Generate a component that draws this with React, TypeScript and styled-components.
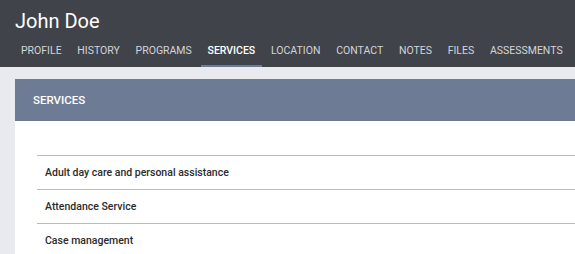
import React from "react";
import styled, { createGlobalStyle } from "styled-components";

const Global = createGlobalStyle`
  html, body { margin: 0; padding: 0; }
  body {
    background: #e9eaef;
    font-family: Roboto, "Noto Sans", "Liberation Sans", sans-serif;
    overflow: hidden;
  }
`;

const Header = styled.header`
  background: #404349;
  display: flex;
  flex-direction: column;
`;

const Title = styled.h1`
  margin: 0;
  padding: 9px 0 0 15px;
  font-size: 20px;
  line-height: 24px;
  font-weight: 400;
  color: #ffffff;
`;

const Nav = styled.nav`
  display: flex;
  padding-left: 14px;
  gap: 1.75px;
  white-space: nowrap;
`;

const Tab = styled.a<{ $active?: boolean }>`
  display: block;
  padding: 11px 7px 8px;
  font-size: 10.5px;
  line-height: 13px;
  font-weight: ${(p) => (p.$active ? 500 : 400)};
  color: ${(p) => (p.$active ? "#ffffff" : "#d3d5d9")};
  border-bottom: 2px solid ${(p) => (p.$active ? "#6e7b94" : "transparent")};
  text-transform: uppercase;
  cursor: pointer;
`;

const Card = styled.section`
  margin: 12px 0 0 15px;
  background: #ffffff;
`;

const CardHeader = styled.div`
  height: 42px;
  display: flex;
  align-items: center;
  padding-left: 18px;
  background: #6e7b94;
  color: #ffffff;
  font-size: 11.5px;
  font-weight: 500;
  text-transform: uppercase;
`;

const CardBody = styled.div`
  padding: 34px 0 0 22px;
  display: flex;
  flex-direction: column;
`;

const Row = styled.div`
  border-top: 1px solid #bcbcbc;
  height: 33px;
  display: flex;
  align-items: center;
  padding-left: 8px;
  font-size: 10.5px;
  font-weight: 500;
  color: #2b2b2b;
`;

const tabs = [
  "Profile",
  "History",
  "Programs",
  "Services",
  "Location",
  "Contact",
  "Notes",
  "Files",
  "Assessments",
];

const services = [
  "Adult day care and personal assistance",
  "Attendance Service",
  "Case management",
];

export default function App() {
  return (
    <>
      <Global />
      <Header>
        <Title>John Doe</Title>
        <Nav>
          {tabs.map((t) => (
            <Tab key={t} $active={t === "Services"}>
              {t}
            </Tab>
          ))}
        </Nav>
      </Header>
      <Card>
        <CardHeader>Services</CardHeader>
        <CardBody>
          {services.map((s) => (
            <Row key={s}>{s}</Row>
          ))}
        </CardBody>
      </Card>
    </>
  );
}
